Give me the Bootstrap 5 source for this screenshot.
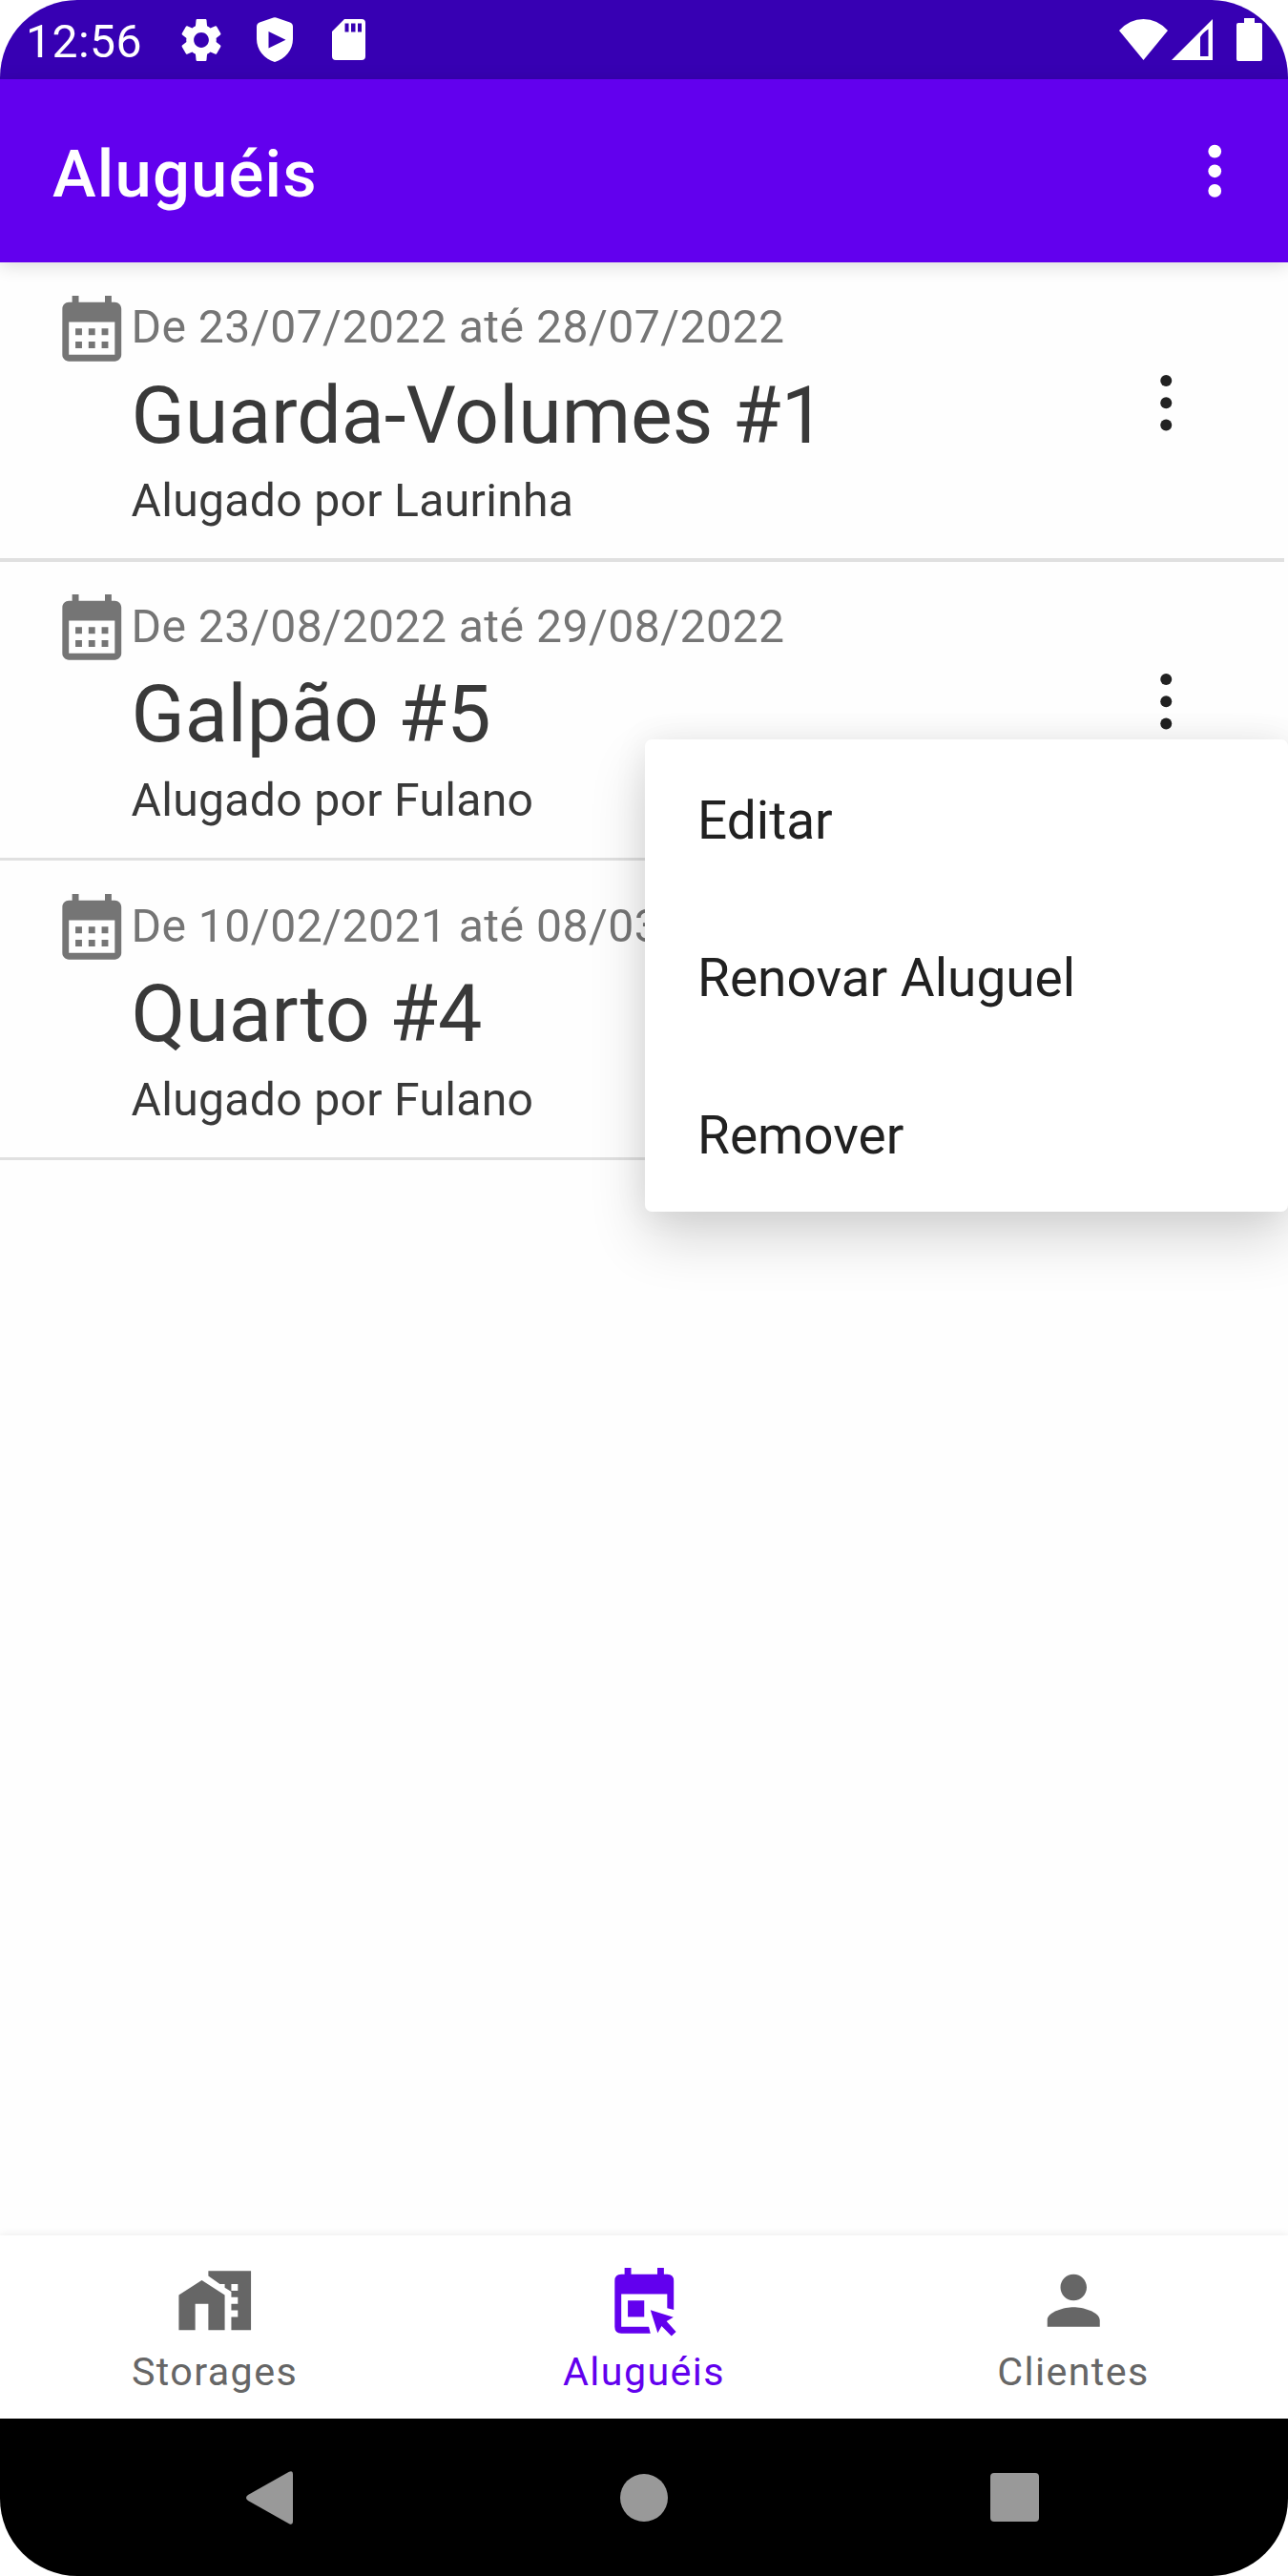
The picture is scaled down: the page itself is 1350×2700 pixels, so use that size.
<!DOCTYPE html>
<html lang="pt-BR">
<head>
<meta charset="utf-8">
<meta name="viewport" content="width=device-width, initial-scale=1">
<title>Aluguéis</title>
<link href="https://cdn.jsdelivr.net/npm/bootstrap@5.3.0/dist/css/bootstrap.min.css" rel="stylesheet">
<style>
  html, body { background: #fff; }
  body { font-family: Roboto, sans-serif; }
  .phone { width: 1350px; height: 2700px; border-radius: 81px; background: #fefefe; }
  svg { display: block; fill: currentColor; flex: none; }

  .status-bar { height: 83px; background: #3700b3; padding: 0 27px 0 27px; }
  .clock { font-size: 48.125px; line-height: 56px; letter-spacing: .45px; padding-top: 4px; width: 162.5px; }
  .status-apps { gap: 37px; }
  .status-signal { gap: 4px; }
  .status-battery { margin-left: 21px; }
  .app-bar { height: 192px; background: #6200ee; padding: 0 35.5px 0 55px; z-index: 2;
             box-shadow: 0 3px 18px rgba(0,0,0,.15); }
  .app-title { font-size: 68.75px; line-height: 80px; font-weight: 500; letter-spacing: 1.18px; padding-top: 7px; }

  .rental { height: 310.3px; padding-left: 55px; }
  .rental-icon { margin-top: 27.6px; color: #757575; }
  .rental-date, .rental-tenant { font-size: 48.125px; line-height: 56px; }
  .rental-date { color: #757575; letter-spacing: .45px; margin-top: 40.3px; }
  .rental-place { color: #393939; font-size: 82.5px; line-height: 97px; margin-top: 15.4px; }
  .rental-tenant { color: #393939; letter-spacing: .3px; margin-top: 13.4px; }
  .rental-menu { width: 82.5px; padding-top: 105.7px; margin-right: 86.75px; color: #212121; }
  .rental-line { height: 3.44px; width: 1346px; background: #e0e0e0; }

  .popup.dropdown-menu { top: 186.2px; right: 0; width: 674px; border: 0; border-radius: 7px;
           padding: 0; background: #fff; z-index: 3;
           box-shadow: 0 28px 58px rgba(0,0,0,.16), 0 0 36px rgba(0,0,0,.07); }
  .popup .dropdown-item { height: 165px; padding: 6px 55px 0; font-size: 55px; line-height: 64px; color: #212121; }

  .bottom-nav { height: 192px; background: #fff; z-index: 1; box-shadow: 0 -1px 9px rgba(0,0,0,.07); }
  .tab { color: #666; font-size: 41.25px; line-height: 48px; letter-spacing: 1.4px; padding-top: 26.7px; }
  .tab span { margin-top: 9.5px; }
  .tab.current { color: #6200ee; }

  .system-nav { height: 165px; background: #000; color: #999; padding: 0 261px 0 258px; }
  .home-key { margin-left: 4px; }
</style>
</head>
<body>
<svg class="d-none" aria-hidden="true">
  <symbol id="calendar" viewBox="0 0 24 24"><path d="M19 4h-1V2h-2v2H8V2H6v2H5c-1.110 0-1.990.9-1.990 2L3 20c0 1.100.89 2 2 2h14c1.100 0 2-.9 2-2V6c0-1.100-.9-2-2-2zm0 16H5V10h14v10zM9 14H7v-2h2v2zm4 0h-2v-2h2v2zm4 0h-2v-2h2v2zm-8 4H7v-2h2v2zm4 0h-2v-2h2v2zm4 0h-2v-2h2v2z"/></symbol>
  <symbol id="kebab" viewBox="0 0 82.5 82.5"><circle cx="41.25" cy="18" r="6"/><circle cx="41.25" cy="41.25" r="6"/><circle cx="41.25" cy="64.5" r="6"/></symbol>
</svg>
<div class="phone d-flex flex-column overflow-hidden position-relative">

  <header class="status-bar d-flex align-items-center text-white">
    <div class="clock">12:56</div>
    <div class="status-apps d-flex align-items-center">
      <svg width="42" height="44" viewBox="2.4 2 19.2 20" preserveAspectRatio="none"><path d="M19.14 12.94c.04-.3.06-.61.06-.94 0-.32-.02-.64-.07-.94l2.03-1.58c.18-.14.23-.41.12-.61l-1.92-3.32c-.12-.22-.37-.29-.59-.22l-2.39.96c-.5-.38-1.03-.7-1.62-.94L14.5 2.4c-.04-.24-.24-.4-.48-.4h-4.04c-.24 0-.43.16-.47.4l-.27 2.95c-.59.24-1.12.57-1.61.94l-2.39-.96c-.22-.08-.47 0-.59.22L2.74 8.87c-.12.21-.08.47.12.61l2.03 1.58c-.05.3-.09.63-.09.94s.02.64.07.94l-2.03 1.58c-.18.14-.23.41-.12.61l1.92 3.32c.12.22.37.29.59.22l2.39-.96c.5.38 1.03.7 1.62.94l.27 2.95c.05.24.24.4.48.4h4.04c.24 0 .44-.16.47-.4l.26-2.95c.59-.24 1.13-.56 1.62-.94l2.39.96c.22.08.47 0 .59-.22l1.92-3.32c.12-.22.07-.47-.12-.61l-2.03-1.58zM12 15.6c-1.98 0-3.6-1.62-3.6-3.6s1.62-3.6 3.6-3.6 3.6 1.62 3.6 3.6-1.62 3.6-3.6 3.6z"/></svg>
      <svg width="38" height="47" viewBox="0 0 38 47"><path fill-rule="evenodd" d="M17.500.5q1.500-.6 3 0L35 5.500q3 1 3 4.500v13c0 11-8 21-19 24C8 44 0 34 0 23V10q0-3.500 3-4.500zM12.500 15v17.500L30.500 23.700z"/></svg>
      <svg class="ms-1" width="35" height="43" viewBox="0 0 35 43"><path fill-rule="evenodd" d="M13 0h18q4 0 4 4v35q0 4-4 4H4q-4 0-4-4V13zM13.500 4.500v9h4v-9zM20 4.500v9h4.500v-9zM27 4.500v9h4v-9z"/></svg>
    </div>
    <div class="status-signal d-flex align-items-center ms-auto">
      <svg width="51" height="43" viewBox="0 0 51 43"><path d="M25.500 43 0 12Q11 0 25.500 0T51 12z"/></svg>
      <svg width="43" height="43" viewBox="0 0 43 43"><path fill-rule="evenodd" d="M43 0v43H0zM38.500 10.500Q32 15 30 19v20h8.500z"/></svg>
      <svg class="status-battery" width="27" height="45" viewBox="0 0 27 45"><path d="M8 0h11v5h6q2 0 2 2v36q0 2-2 2H2q-2 0-2-2V7q0-2 2-2h6z"/></svg>
    </div>
  </header>

  <nav class="app-bar d-flex align-items-center justify-content-between text-white position-relative">
    <div class="app-title">Aluguéis</div>
    <svg width="82.5" height="82.5" viewBox="0 0 24 24"><circle cx="12" cy="6" r="2"/><circle cx="12" cy="12" r="2"/><circle cx="12" cy="18" r="2"/></svg>
  </nav>

  <main class="flex-grow-1">
    <section>
      <div class="rental d-flex">
        <svg class="rental-icon" width="82.5" height="82.5"><use href="#calendar"/></svg>
        <div class="flex-grow-1">
          <div class="rental-date">De 23/07/2022 até 28/07/2022</div>
          <div class="rental-place">Guarda-Volumes #1</div>
          <div class="rental-tenant">Alugado por Laurinha</div>
        </div>
        <div class="rental-menu"><svg width="82.5" height="82.5"><use href="#kebab"/></svg></div>
      </div>
      <div class="rental-line"></div>
    </section>

    <section class="position-relative">
      <div class="rental d-flex">
        <svg class="rental-icon" width="82.5" height="82.5"><use href="#calendar"/></svg>
        <div class="flex-grow-1">
          <div class="rental-date">De 23/08/2022 até 29/08/2022</div>
          <div class="rental-place">Galpão #5</div>
          <div class="rental-tenant">Alugado por Fulano</div>
        </div>
        <div class="rental-menu"><svg width="82.5" height="82.5"><use href="#kebab"/></svg></div>
      </div>
      <div class="rental-line"></div>
      <div class="popup dropdown-menu show">
        <a class="dropdown-item d-flex align-items-center">Editar</a>
        <a class="dropdown-item d-flex align-items-center">Renovar Aluguel</a>
        <a class="dropdown-item d-flex align-items-center">Remover</a>
      </div>
    </section>

    <section>
      <div class="rental d-flex">
        <svg class="rental-icon" width="82.5" height="82.5"><use href="#calendar"/></svg>
        <div class="flex-grow-1">
          <div class="rental-date">De 10/02/2021 até 08/03</div>
          <div class="rental-place">Quarto #4</div>
          <div class="rental-tenant">Alugado por Fulano</div>
        </div>
      </div>
      <div class="rental-line"></div>
    </section>
  </main>

  <nav class="bottom-nav d-flex position-relative">
    <div class="tab d-flex flex-column align-items-center col-4">
      <svg width="82.5" height="82.5" viewBox="0 0 24 24"><path d="M1 10.300V21h5v-8h4v8h5V10.300L8 5.800z"/><path fill-rule="evenodd" d="M10 3v1.500l3.500 2.500H15v1.100L17 9.300V11h2v2h-2v2h2v2h-2v4h6V3zM17 7h2v2h-2z"/></svg>
      <span>Storages</span>
    </div>
    <div class="tab current d-flex flex-column align-items-center col-4">
      <svg width="82.5" height="82.5" viewBox="0 0 24 24"><path d="M19 14.300V10H5v10h8.400l.5 2H5q-2 0-2-2V6q0-2 2-2h1V2h2v2h8V2h2v2h1q2 0 2 2v8.800z"/><path d="M7 12h5v5H7z"/><path d="M13.900 14.900l7 2.200-2.100 1.200 2.900 3.200-1.400 1.300-3-3-1.200 2.100z"/></svg>
      <span>Aluguéis</span>
    </div>
    <div class="tab d-flex flex-column align-items-center col-4">
      <svg width="82.5" height="82.5" viewBox="0 0 24 24"><path d="M12 12c2.210 0 4-1.790 4-4s-1.790-4-4-4-4 1.790-4 4 1.790 4 4 4zm0 2c-2.670 0-8 1.340-8 4v2h16v-2c0-2.660-5.330-4-8-4z"/></svg>
      <span>Clientes</span>
    </div>
  </nav>

  <footer class="system-nav d-flex align-items-center justify-content-between">
    <svg width="49" height="56" viewBox="0 0 49 56"><path d="M2 25 45 .8q4-1.800 4 2.200v50q0 4-4 2.200L2 31q-4-3 0-6z"/></svg>
    <svg class="home-key" width="50" height="50" viewBox="0 0 50 50"><circle cx="25" cy="25" r="25"/></svg>
    <svg width="51" height="51" viewBox="0 0 51 51"><rect width="51" height="51" rx="4"/></svg>
  </footer>
</div>
<script src="https://cdn.jsdelivr.net/npm/bootstrap@5.3.0/dist/js/bootstrap.bundle.min.js"></script>
</body>
</html>
